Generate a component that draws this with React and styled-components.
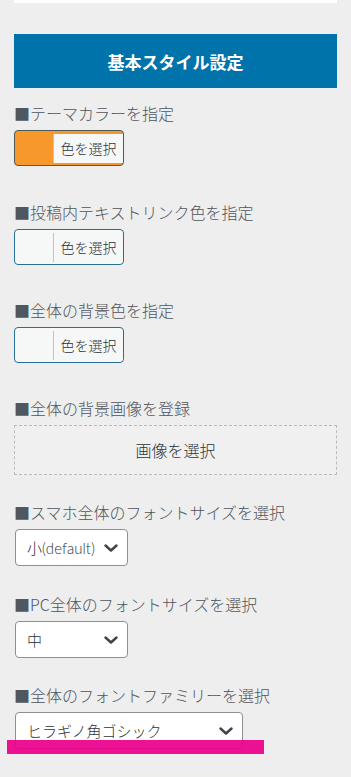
import styled, { createGlobalStyle } from "styled-components";

const GlobalStyle = createGlobalStyle`
    html, body {
        margin: 0;
        padding: 0;
        background: #eeeeee;
    }
    body {
        font-family: "Noto Sans CJK JP", "Noto Sans", sans-serif;
    }
`

const Page = styled.div`
    display: flex;
    flex-direction: column;
    padding: 0 14px 40px;
    min-height: 777px;
    box-sizing: border-box;
`

const TopPanel = styled.div`
    height: 3px;
    background: #ffffff;
`

const Header = styled.h2`
    margin: 31px 0 0;
    height: 54px;
    display: flex;
    align-items: center;
    justify-content: center;
    background: #0073aa;
    color: #ffffff;
    font-size: 17px;
    font-weight: 700;
`

const Field = styled.div`
    display: flex;
    flex-direction: column;
    align-items: flex-start;
    margin-top: ${props => props.$top}px;
`

const Label = styled.div`
    font-size: 16px;
    font-weight: 300;
    line-height: 24px;
    color: #50555a;
    margin-bottom: 5px;
    white-space: nowrap;
`

const Mark = styled.span`
    color: #50575e;
    font-weight: 400;
`

const ColorButton = styled.div`
    display: flex;
    align-items: center;
    width: 110px;
    height: 36px;
    box-sizing: border-box;
    border: 1px solid ${props => props.$border};
    border-radius: 4px;
    background: ${props => props.$color};
    overflow: hidden;
`

const Swatch = styled.span`
    width: 38px;
    flex: none;
`

const ColorText = styled.span`
    flex: 1;
    height: 29px;
    display: flex;
    align-items: center;
    justify-content: center;
    background: #f6f7f7;
    border-left: 1px solid #c3c4c7;
    font-size: 14px;
    font-weight: 300;
    color: #2c3338;
`

const UploadBox = styled.div`
    align-self: stretch;
    height: 50px;
    display: flex;
    align-items: center;
    justify-content: center;
    box-sizing: border-box;
    border: 1px dashed #b8babd;
    background: #f0f0f1;
    font-size: 16px;
    font-weight: 300;
    color: #2c3338;
`

const SelectWrap = styled.div`
    position: relative;
    margin-left: 1px;
`

const Select = styled.div`
    width: ${props => props.$width}px;
    height: 37px;
    box-sizing: border-box;
    display: flex;
    align-items: center;
    justify-content: space-between;
    padding: 0 9px 0 11px;
    border: 1px solid #8c8f94;
    border-radius: 4px;
    background: #ffffff;
    font-family: "Lato", "Noto Sans CJK JP", sans-serif;
    font-size: 15px;
    font-weight: 300;
    color: #2c3338;
`

const Marker = styled.div`
    position: absolute;
    left: -8px;
    top: 28px;
    width: 257px;
    height: 14px;
    background: rgba(236, 0, 140, 0.93);
`

const Chevron = () => (
    <svg width="14" height="8" viewBox="0 0 14 8">
        <path d="M1.5 1.5 L7 6.5 L12.5 1.5" fill="none" stroke="#3c434a" strokeWidth="2.4" strokeLinecap="round" strokeLinejoin="round" />
    </svg>
)

const ColorField = ({ top, label, color, border }) => (
    <Field $top={top}>
        <Label><Mark>■</Mark>{label}</Label>
        <ColorButton $color={color} $border={border}>
            <Swatch />
            <ColorText>色を選択</ColorText>
        </ColorButton>
    </Field>
)

const SelectField = ({ top, label, value, width, marked }) => (
    <Field $top={top}>
        <Label><Mark>■</Mark>{label}</Label>
        <SelectWrap>
            <Select $width={width}>
                <span>{value}</span>
                <Chevron />
            </Select>
            {marked && <Marker />}
        </SelectWrap>
    </Field>
)

const App = () => {
    return (
        <Page>
            <GlobalStyle />
            <TopPanel />
            <Header>基本スタイル設定</Header>
            <ColorField top={13} label="テーマカラーを指定" color="#f6982b" border="#4d5a55" />
            <ColorField top={34} label="投稿内テキストリンク色を指定" color="#f6f7f7" border="#2a6e96" />
            <ColorField top={33} label="全体の背景色を指定" color="#f6f7f7" border="#2a6e96" />
            <Field $top={33}>
                <Label><Mark>■</Mark>全体の背景画像を登録</Label>
                <UploadBox>画像を選択</UploadBox>
            </Field>
            <SelectField top={25} label="スマホ全体のフォントサイズを選択" value="小(default)" width={113} />
            <SelectField top={26} label="PC全体のフォントサイズを選択" value="中" width={113} />
            <SelectField top={25} label="全体のフォントファミリーを選択" value="ヒラギノ角ゴシック" width={228} marked />
        </Page>
    );
}

export default App;
